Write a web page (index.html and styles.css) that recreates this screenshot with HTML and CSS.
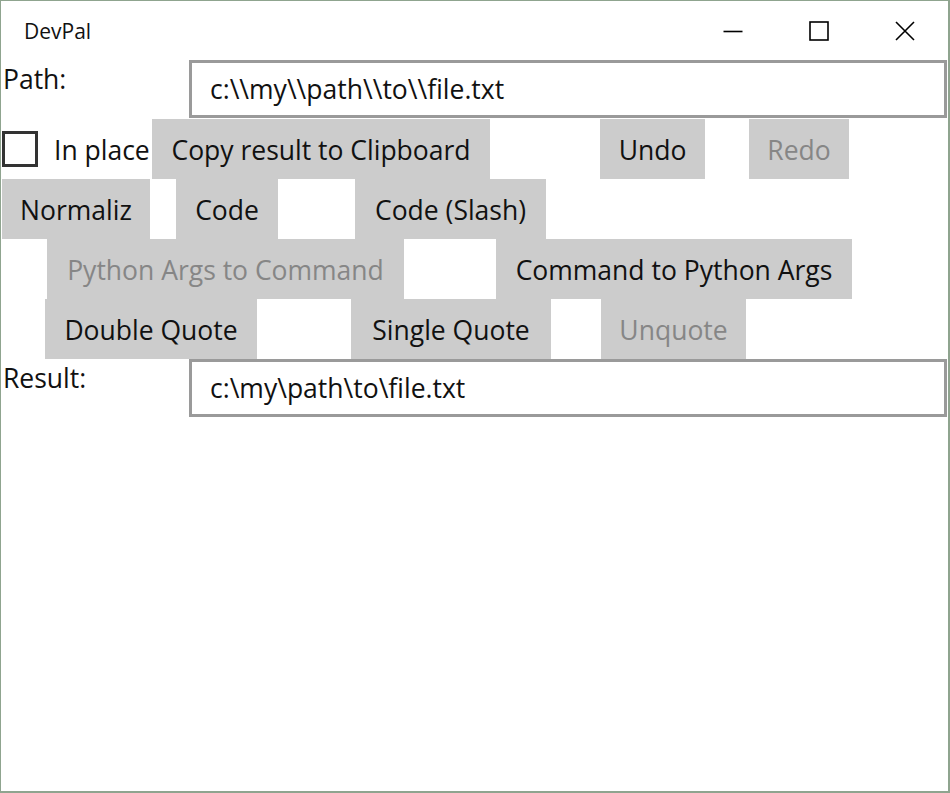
FILE: index.html
```html
<!DOCTYPE html>
<html>
<head>
<meta charset="utf-8">
<link rel="stylesheet" href="styles.css">
</head>
<body>
<div class="window">
  <div class="titlebar">
    <div class="title">DevPal</div>
    <div class="caption">
      <div class="cap-btn"><svg width="20" height="20" viewBox="0 0 20 20"><path d="M0.5 10.5 H19.5" stroke="#000" stroke-width="1.6" fill="none"/></svg></div>
      <div class="cap-btn"><svg width="20" height="20" viewBox="0 0 20 20"><rect x="1" y="1" width="18" height="18" stroke="#000" stroke-width="1.6" fill="none"/></svg></div>
      <div class="cap-btn"><svg width="20" height="20" viewBox="0 0 20 20"><path d="M1 1 L19 19 M19 1 L1 19" stroke="#000" stroke-width="1.6" fill="none"/></svg></div>
    </div>
  </div>

  <div class="field-row">
    <div class="field-label">Path:</div>
    <div class="textbox">c:\\my\\path\\to\\file.txt</div>
  </div>

  <div class="btn-row">
    <div class="checkbox"></div>
    <div class="check-label">In place</div>
    <div class="btn w-copy">Copy result to Clipboard</div>
    <div class="btn w-undo">Undo</div>
    <div class="btn w-redo disabled">Redo</div>
  </div>

  <div class="btn-row">
    <div class="btn w-norm">Normaliz</div>
    <div class="btn w-code">Code</div>
    <div class="btn w-slash">Code (Slash)</div>
  </div>

  <div class="btn-row">
    <div class="btn w-pyargs disabled">Python Args to Command</div>
    <div class="btn w-cmd">Command to Python Args</div>
  </div>

  <div class="btn-row">
    <div class="btn w-dq">Double Quote</div>
    <div class="btn w-sq">Single Quote</div>
    <div class="btn w-unq disabled">Unquote</div>
  </div>

  <div class="field-row result">
    <div class="field-label">Result:</div>
    <div class="textbox">c:\my\path\to\file.txt</div>
  </div>
</div>
</body>
</html>
```

FILE: styles.css
```css
html, body {
  margin: 0;
  padding: 0;
  background: #ffffff;
}

.window {
  width: 950px;
  height: 793px;
  box-sizing: border-box;
  border: 1px solid #8fa48f;
  border-right-width: 2px;
  border-bottom-width: 2px;
  background: #ffffff;
  font-family: "Open Sans", "Noto Sans", sans-serif;
  font-size: 26.5px;
  color: #111111;
  overflow: hidden;
}

.titlebar {
  height: 59px;
  display: flex;
  align-items: center;
  justify-content: space-between;
}

.title {
  font-size: 21px;
  padding-left: 23px;
  color: #111;
}

.caption {
  display: flex;
  height: 59px;
}

.cap-btn {
  width: 86px;
  height: 59px;
  display: flex;
  align-items: center;
  justify-content: center;
}

.field-row {
  display: flex;
  align-items: flex-start;
  height: 59px;
}

.field-label {
  width: 186px;
  padding-left: 2px;
  line-height: 38px;
}

.textbox {
  flex: 1;
  height: 58px;
  box-sizing: border-box;
  border: 3px solid #9a9a9a;
  margin-right: 1px;
  padding-left: 18px;
  display: flex;
  align-items: center;
  white-space: nowrap;
}

.btn-row {
  display: flex;
  align-items: center;
  height: 60px;
}

.btn {
  height: 60px;
  background: #cccccc;
  display: flex;
  align-items: center;
  justify-content: center;
  white-space: nowrap;
  box-sizing: border-box;
  padding-top: 2px;
}

.btn.disabled {
  color: #868686;
}

.checkbox {
  width: 36px;
  height: 36px;
  box-sizing: border-box;
  border: 3px solid #333333;
  margin-left: 1px;
}

.check-label {
  width: 114px;
  box-sizing: border-box;
  padding-left: 16px;
  padding-top: 2px;
  white-space: nowrap;
}

.w-copy { width: 338px; }
.w-undo { width: 105px; margin-left: 110px; }
.w-redo { width: 100px; margin-left: 44px; }

.w-norm { width: 148px; margin-left: 1px; }
.w-code { width: 102px; margin-left: 26px; }
.w-slash { width: 191px; margin-left: 77px; }

.w-pyargs { width: 357px; margin-left: 46px; }
.w-cmd { width: 356px; margin-left: 92px; }

.w-dq { width: 212px; margin-left: 44px; }
.w-sq { width: 200px; margin-left: 94px; }
.w-unq { width: 145px; margin-left: 50px; }
```
